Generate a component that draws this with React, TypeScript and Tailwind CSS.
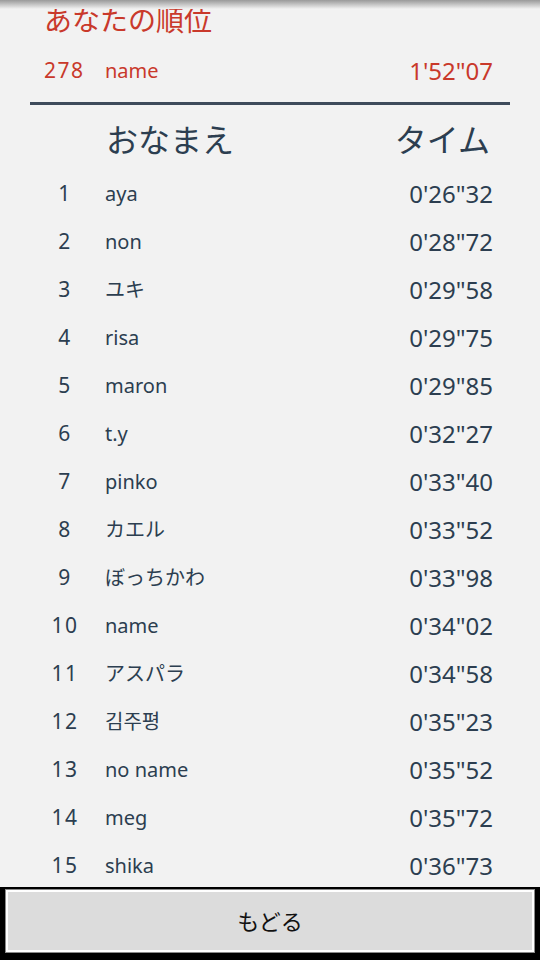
import React from "react";

const ranking: [number, string, string][] = [
  [1, "aya", "0'26\"32"],
  [2, "non", "0'28\"72"],
  [3, "ユキ", "0'29\"58"],
  [4, "risa", "0'29\"75"],
  [5, "maron", "0'29\"85"],
  [6, "t.y", "0'32\"27"],
  [7, "pinko", "0'33\"40"],
  [8, "カエル", "0'33\"52"],
  [9, "ぼっちかわ", "0'33\"98"],
  [10, "name", "0'34\"02"],
  [11, "アスパラ", "0'34\"58"],
  [12, "김주평", "0'35\"23"],
  [13, "no name", "0'35\"52"],
  [14, "meg", "0'35\"72"],
  [15, "shika", "0'36\"73"],
];

const font = {
  fontFamily:
    '"Noto Sans", "Noto Sans CJK JP", "Noto Sans CJK KR", sans-serif',
};

export default function App() {
  return (
    <div className="w-[540px] h-[960px] flex flex-col bg-black" style={font}>
      <div className="relative h-[887px] overflow-hidden bg-[#f2f2f2]">
        <div className="absolute inset-x-0 top-0 h-[9px] bg-gradient-to-b from-[#9a9a9a] to-[#f2f2f2]" />

        {/* your rank */}
        <div className="h-[40px] pl-[44px] flex items-center text-[28px] text-[#c9392b]">
          あなたの順位
        </div>
        <div className="h-[62px] flex items-center text-[#c9392b]">
          <span className="w-[105px] pl-[44px] text-[21px] tracking-[1.5px]">278</span>
          <span className="flex-1 text-[20px]">name</span>
          <span className="pr-[47px] text-[24px]">1'52"07</span>
        </div>
        <div className="mx-[30px] h-[3px] bg-[#3e4b5b]" />

        {/* header */}
        <div className="h-[65px] pt-[4px] flex items-center text-[32px] text-[#2c3e50]">
          <span className="w-[106px]" />
          <span className="flex-1">おなまえ</span>
          <span className="pr-[50px]">タイム</span>
        </div>

        {ranking.map(([rank, name, time]) => (
          <div key={rank} className="h-[48px] flex items-center text-[#2c3e50]">
            <span className="ml-[42px] w-[46px] text-center text-[21px] tracking-[1.5px]">{rank}</span>
            <span className="ml-[17px] flex-1 text-[20px]">{name}</span>
            <span className="pr-[47px] text-[24px]">{time}</span>
          </div>
        ))}
      </div>

      <div className="h-[73px] px-[5px] pt-[2px]">
        <div className="h-[64px] border border-[#8a8a8a]">
          <button
            type="button"
            className="w-full h-full border-2 border-white bg-[#dcdcdc] text-[22px] text-[#111]"
          >
            もどる
          </button>
        </div>
      </div>
    </div>
  );
}
